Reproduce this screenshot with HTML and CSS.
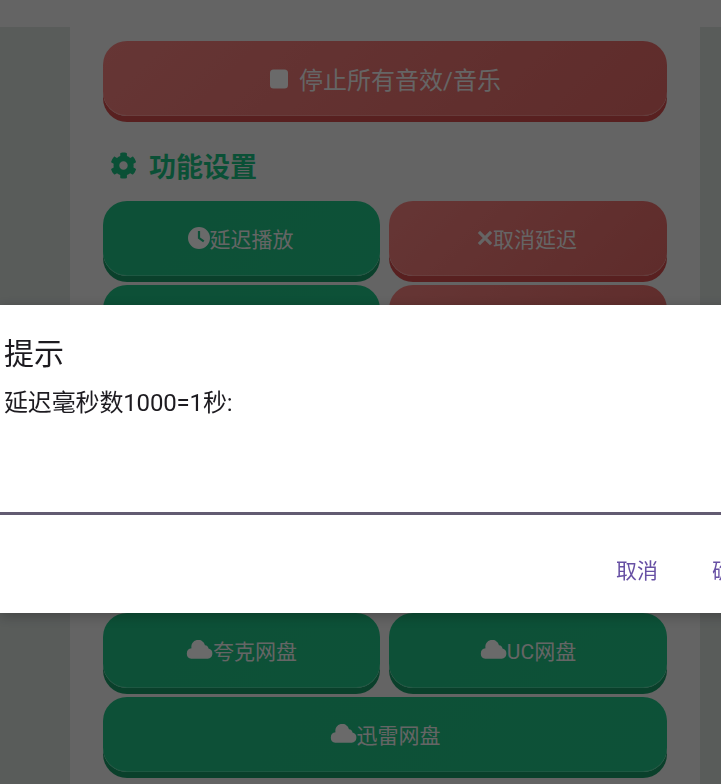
FILE: index.html
```html
<!DOCTYPE html>
<html lang="zh-CN">
<head>
    <meta charset="UTF-8">
    <meta name="viewport" content="width=device-width, initial-scale=1.0">
    <title>功能设置</title>
    <link rel="stylesheet" href="styles.css">
</head>
<body>
    <div class="top-bar"></div>

    <div class="panel">
        <button class="btn btn-red btn-stop">
            <svg class="icon-stop" viewBox="0 0 20 20"><rect x="1" y="0.5" width="18" height="19" rx="3.5"/></svg>
            <span>停止所有音效/音乐</span>
        </button>

        <h3 class="section-title">
            <svg class="icon-gear" viewBox="0 0 512 512"><path d="M487 316l-42-24c4-23 4-47 0-70l42-25c5-3 7-8 6-14-11-35-30-67-54-93-4-4-10-5-15-2l-42 24c-18-15-39-27-61-35V29c0-6-4-11-9-12-37-8-74-8-109 0-5 1-9 6-9 12v48c-22 8-43 20-61 35L91 88c-5-3-11-2-15 2-24 26-43 58-54 93-2 6 1 11 6 14l42 25c-4 23-4 47 0 70l-42 24c-5 3-7 9-6 14 11 35 30 67 54 93 4 4 10 5 15 2l42-24c18 15 39 27 61 35v49c0 5 4 10 9 12 37 8 74 8 109 0 5-2 9-7 9-12v-49c22-8 43-20 61-35l42 24c5 3 11 2 15-2 24-26 43-58 54-93 1-5-1-11-6-14zM256 336c-44 0-80-36-80-80s36-80 80-80 80 36 80 80-36 80-80 80z"/></svg>
            <span>功能设置</span>
        </h3>

        <div class="btn-grid">
            <button class="btn btn-green">
                <svg class="icon-clock" viewBox="1 1 22 22"><path fill-rule="evenodd" d="M12 1a11 11 0 1 0 0 22 11 11 0 0 0 0-22zM10.900 5h2.200v6.400l4.300 3.100-1.300 1.800-5.200-3.800z"/></svg>
                <span>延迟播放</span>
            </button>
            <button class="btn btn-red">
                <svg class="icon-x" viewBox="0 0 16 16"><path d="M0.800 3l2.200-2.200 5 5 5-5 2.200 2.200-5 5 5 5-2.200 2.200-5-5-5 5-2.200-2.200 5-5z"/></svg>
                <span>取消延迟</span>
            </button>
            <button class="btn btn-green"></button>
            <button class="btn btn-red"></button>
        </div>

        <div class="btn-grid btn-grid-cloud">
            <button class="btn btn-green btn-cloud">
                <svg class="icon-cloud" viewBox="0 0 27 19"><path d="M5.300 18.800A5.300 5.300 0 0 1 5.500 8.300 6.900 6.900 0 0 1 19 5.200 4 4 0 0 1 22.500 8.600 5.200 5.200 0 0 1 21.700 18.800z"/></svg>
                <span>夸克网盘</span>
            </button>
            <button class="btn btn-green btn-cloud">
                <svg class="icon-cloud" viewBox="0 0 27 19"><path d="M5.300 18.800A5.300 5.300 0 0 1 5.500 8.300 6.900 6.900 0 0 1 19 5.200 4 4 0 0 1 22.500 8.600 5.200 5.200 0 0 1 21.700 18.800z"/></svg>
                <span>UC网盘</span>
            </button>
            <button class="btn btn-green btn-cloud btn-wide">
                <svg class="icon-cloud" viewBox="0 0 27 19"><path d="M5.300 18.800A5.300 5.300 0 0 1 5.500 8.300 6.900 6.900 0 0 1 19 5.200 4 4 0 0 1 22.500 8.600 5.200 5.200 0 0 1 21.700 18.800z"/></svg>
                <span>迅雷网盘</span>
            </button>
        </div>
    </div>

    <!-- prompt dialog -->
    <div class="overlay">
        <div class="dialog">
            <div class="dialog-title">提示</div>
            <div class="dialog-message">延迟毫秒数1000=1秒:</div>
            <div class="dialog-input"></div>
            <div class="dialog-actions">
                <button class="dialog-btn">取消</button>
                <button class="dialog-btn">确定</button>
            </div>
        </div>
    </div>
</body>
</html>
```

FILE: styles.css
```css
* {
    box-sizing: border-box;
}

html, body {
    height: 100%;
}

body {
    margin: 0;
    overflow: hidden;
    background: #b2b8b5;
    font-family: Roboto, "Noto Sans CJK SC", sans-serif;
}

.top-bar {
    height: 27px;
    background: #c8c8c8;
}

.panel {
    width: 630px;
    margin-left: 70px;
    height: 757px;
    padding: 14px 33px 0;
    background: #c8c8c8;
}

.btn {
    display: flex;
    align-items: center;
    justify-content: center;
    width: 100%;
    height: 75px;
    padding: 0 2px 2px 0;
    border: none;
    border-radius: 24px;
    color: #cbcbcb;
    font-family: inherit;
    font-size: 21px;
}

.btn-green {
    background: linear-gradient(135deg, #1aa06e, #1aa370);
    box-shadow: inset 0 -1px 0 rgba(255, 255, 255, 0.15), 0 6px 0 #148056;
}

.btn-red {
    background: linear-gradient(135deg, #cc6c6a, #be5856);
    box-shadow: inset 0 -1px 0 rgba(255, 255, 255, 0.15), 0 6px 0 #b04040;
}

.btn-stop {
    gap: 10px;
    padding: 0;
    font-size: 24px;
}

.btn-cloud {
    padding: 0 0 2px;
}

.icon-stop {
    width: 20px;
    height: 20px;
    fill: #d4d4d4;
}

.section-title {
    display: flex;
    align-items: center;
    gap: 12px;
    height: 34px;
    margin: 32px 0 19px;
    padding-left: 7px;
    color: #15a06c;
    font-size: 27px;
    font-weight: 700;
}

.icon-gear {
    width: 27px;
    height: 27px;
    fill: #15a06c;
}

.btn-grid {
    display: grid;
    grid-template-columns: 277px 278px;
    column-gap: 9px;
    row-gap: 9px;
}

.btn-grid-cloud {
    margin-top: 253px;
}

.btn-wide {
    grid-column: 1 / 3;
}

.icon-clock {
    width: 22px;
    height: 22px;
    fill: #d4d4d4;
}

.icon-x {
    width: 16px;
    height: 16px;
    fill: #cbcbcb;
}

.icon-cloud {
    width: 27px;
    height: 19px;
    fill: #d4d4d4;
}

.overlay {
    position: fixed;
    top: 0;
    left: 0;
    right: 0;
    bottom: 0;
    padding-top: 305px;
    background: rgba(0, 0, 0, 0.5);
}

.dialog {
    display: flex;
    flex-direction: column;
    width: 780px;
    height: 308px;
    padding: 30px 4px 0;
    background: #fff;
    box-shadow: 0 3px 12px rgba(0, 0, 0, 0.25);
}

.dialog-title {
    color: #1d1b20;
    font-size: 30px;
    line-height: 38px;
}

.dialog-message {
    margin-top: 14px;
    color: #1d1b20;
    font-size: 24px;
    line-height: 32px;
    letter-spacing: -0.15px;
}

.dialog-input {
    width: 780px;
    margin: 93px 0 0 -4px;
    border-bottom: 3px solid #625b71;
}

.dialog-actions {
    display: flex;
    gap: 54px;
    margin-top: 42px;
    padding-left: 612px;
}

.dialog-btn {
    flex: none;
    padding: 0;
    border: none;
    background: none;
    color: #6750a4;
    font-family: inherit;
    font-size: 21px;
    line-height: 28px;
}
```
